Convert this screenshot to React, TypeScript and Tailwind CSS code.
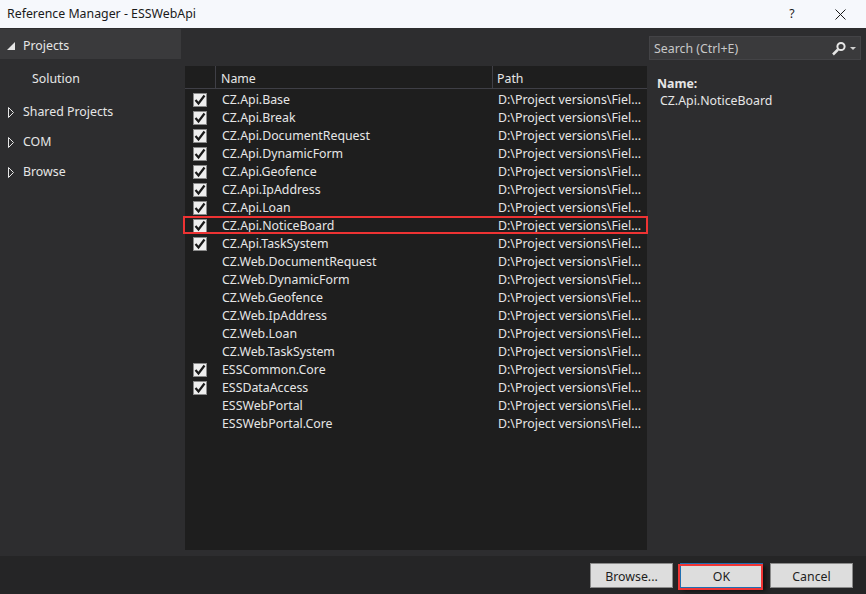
const rows = [
  { name: 'CZ.Api.Base', checked: true },
  { name: 'CZ.Api.Break', checked: true },
  { name: 'CZ.Api.DocumentRequest', checked: true },
  { name: 'CZ.Api.DynamicForm', checked: true },
  { name: 'CZ.Api.Geofence', checked: true },
  { name: 'CZ.Api.IpAddress', checked: true },
  { name: 'CZ.Api.Loan', checked: true },
  { name: 'CZ.Api.NoticeBoard', checked: true, marked: true },
  { name: 'CZ.Api.TaskSystem', checked: true },
  { name: 'CZ.Web.DocumentRequest' },
  { name: 'CZ.Web.DynamicForm' },
  { name: 'CZ.Web.Geofence' },
  { name: 'CZ.Web.IpAddress' },
  { name: 'CZ.Web.Loan' },
  { name: 'CZ.Web.TaskSystem' },
  { name: 'ESSCommon.Core', checked: true },
  { name: 'ESSDataAccess', checked: true },
  { name: 'ESSWebPortal' },
  { name: 'ESSWebPortal.Core' },
];

function Arrow({ open }: { open?: boolean }) {
  return (
    <svg width="9" height="11" viewBox="0 0 9 11" className="shrink-0">
      {open ? (
        <path d="M0 9 L8 9 L8 1 Z" fill="#e6e6e6" />
      ) : (
        <path d="M1.5 0.5 L6.5 5.5 L1.5 10.5 Z" fill="none" stroke="#e6e6e6" />
      )}
    </svg>
  );
}

function TreeItem({ label, open }: { label: string; open?: boolean }) {
  return (
    <div
      className={`flex items-center gap-[7px] h-[30px] pl-[7px] pt-[4px] ${
        open ? 'bg-[#3a3a3c]' : ''
      }`}
    >
      <Arrow open={open} />
      <span>{label}</span>
    </div>
  );
}

function Check() {
  return (
    <div className="w-[14px] h-[14px] bg-[#efefef] border border-[#8a8a8a] flex items-center justify-center">
      <svg width="12" height="12" viewBox="0 0 12 12">
        <path d="M1.5 6 L4.5 9.5 L10.5 1.5" fill="none" stroke="#1a1a1a" strokeWidth="2.2" />
      </svg>
    </div>
  );
}

function FooterButton({ label, primary }: { label: string; primary?: boolean }) {
  return (
    <button
      type="button"
      className={`relative h-[25px] w-[83px] pt-[4px] bg-[#dddddd] text-[#1e1e1e] border ${
        primary
          ? 'border-[#1f6fb2] shadow-[3px_3px_4px_#111]'
          : 'border-[#8a8a8a]'
      }`}
    >
      {label}
      {primary && (
        <span className="absolute left-[-3px] right-[-1px] top-0 bottom-[-3px] border-2 border-[#f03535]" />
      )}
    </button>
  );
}

export default function App() {
  return (
    <div className="w-[866px] h-[594px] flex flex-col bg-[#2d2d2f] text-[12.35px] text-[#e6e6e6] font-['Noto_Sans',sans-serif] overflow-hidden">
      <header className="h-[28px] shrink-0 bg-[#f6f8fc] text-[#1a1a1a] flex items-center pl-[7px]">
        <span className="grow">Reference Manager - ESSWebApi</span>
        <span className="w-[46px] text-center mr-[20px]">?</span>
        <svg width="11" height="11" viewBox="0 0 11 11" className="mr-[20px]">
          <path d="M0.5 0.5 L10.5 10.5 M10.5 0.5 L0.5 10.5" stroke="#1a1a1a" />
        </svg>
      </header>

      <main className="grow flex min-h-0">
        <aside className="w-[181px] shrink-0 pt-[1px]">
          <TreeItem label="Projects" open />
          <div className="h-[36px] pl-[32px] flex items-center pt-[4px]">Solution</div>
          <TreeItem label="Shared Projects" />
          <TreeItem label="COM" />
          <TreeItem label="Browse" />
        </aside>

        <section className="w-[462px] ml-[4px] mt-[38px] mb-[6px] bg-[#1e1e1e] shrink-0 flex flex-col">
          <div className="h-[23px] flex border-b border-[#3f3f46] shrink-0">
            <div className="w-[31px] border-r border-[#3f3f46]" />
            <div className="w-[277px] pl-[5px] border-r border-[#3f3f46] leading-[26px]">Name</div>
            <div className="pl-[4px] leading-[26px]">Path</div>
          </div>
          <ul className="flex flex-col pt-[2px]">
            {rows.map((row) => (
              <li key={row.name} className="relative h-[18px] flex items-center">
                <div className="w-[32px] pl-[8px]">{row.checked && <Check />}</div>
                <div className="w-[281px] pl-[5px] whitespace-nowrap">{row.name}</div>
                <div className="whitespace-nowrap">D:\Project versions\Fiel...</div>
                {row.marked && (
                  <div className="absolute left-[-2px] right-[-1px] top-[-1px] h-[18px] border-2 border-[#ee3333] pointer-events-none" />
                )}
              </li>
            ))}
          </ul>
        </section>

        <aside className="grow pl-[2px] pr-[5px] pt-[8px]">
          <div className="h-[24px] bg-[#3a3a3c] border border-[#434346] flex items-center pl-[4px] pt-[2px] text-[#c8c8c8]">
            <span className="grow">Search (Ctrl+E)</span>
            <svg width="16" height="15" viewBox="0 0 16 15" className="mr-[1px] mb-[2px]">
              <circle cx="10" cy="5.5" r="3.6" fill="none" stroke="#e6e6e6" strokeWidth="2" />
              <path d="M7 8.5 L2 13.5" stroke="#e6e6e6" strokeWidth="2.5" />
            </svg>
            <svg width="6" height="3" viewBox="0 0 6 3" className="ml-[2px] mr-[4px] mb-[2px]">
              <path d="M0 0 L6 0 L3 3 Z" fill="#d0d0d0" />
            </svg>
          </div>
          <div className="mt-[16px] pl-[8px] font-bold leading-[16px]">Name:</div>
          <div className="pl-[11px] leading-[18px]">CZ.Api.NoticeBoard</div>
        </aside>
      </main>

      <footer className="h-[38px] shrink-0 bg-[#252526] flex items-start justify-end gap-[7px] pt-[7px] pr-[13px]">
        <FooterButton label="Browse..." />
        <FooterButton label="OK" primary />
        <FooterButton label="Cancel" />
      </footer>
    </div>
  );
}
